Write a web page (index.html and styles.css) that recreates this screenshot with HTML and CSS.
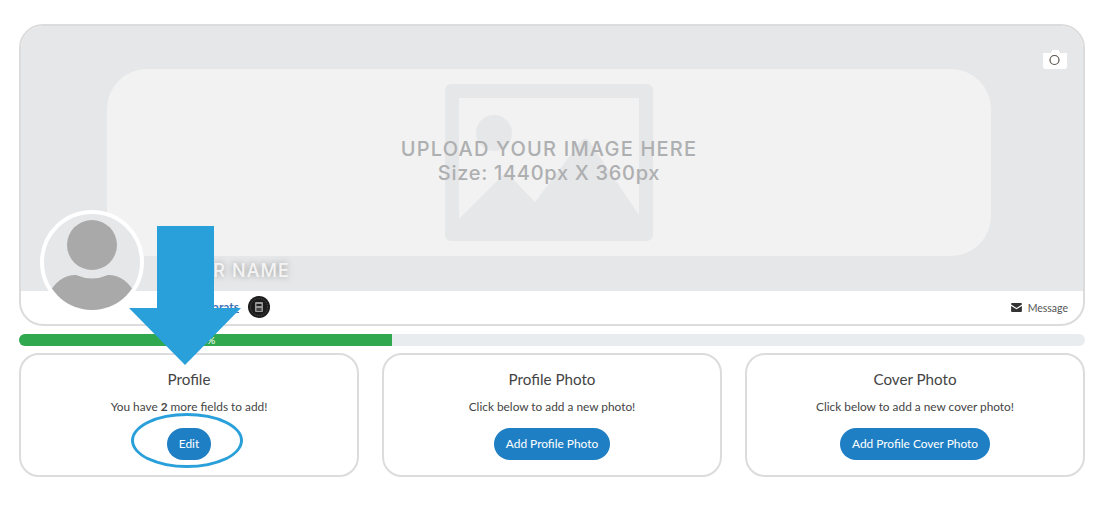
FILE: index.html
```html
<!DOCTYPE html>
<html>
<head>
    <title>Profile</title>
    <link rel="stylesheet" href="styles.css">
</head>
<body>
    <div class="container">
        <div class="hero">
            <div class="cover">
                <div class="upload-panel">
                    <svg class="upload-icon" viewBox="0 0 208 157">
                        <path fill-rule="evenodd" d="M6 0H202a6 6 0 0 1 6 6V151a6 6 0 0 1-6 6H6a6 6 0 0 1-6-6V6a6 6 0 0 1 6-6ZM14 14V135L61 88L90 118L136 57Q140 52 144 57L194 131V14Z"/>
                        <circle cx="49" cy="49" r="18"/>
                    </svg>
                    <div class="upload-text">
                        <div class="upload-title">UPLOAD YOUR IMAGE HERE</div>
                        <div class="upload-size">Size: 1440px X 360px</div>
                    </div>
                </div>
                <svg class="camera" viewBox="0 0 26 22">
                    <path class="camera-body" d="M1 5H8L10 2H17L19 5H25V20Q25 21 24 21H2Q1 21 1 20Z"/>
                    <circle class="camera-lens" cx="12.500" cy="12" r="4.500"/>
                </svg>
                <div class="hero-name">YOUR NAME</div>
            </div>
            <div class="hero-bar">
                <div class="hero-links">
                    <a class="carats" href="#">0 Carats</a>
                    <svg class="badge" viewBox="0 0 22 22">
                        <circle cx="11" cy="11" r="11" fill="#1c1c1c"/>
                        <circle cx="11" cy="11" r="8.500" fill="none" stroke="#555" stroke-dasharray="1 1"/>
                        <rect x="7" y="6" width="8" height="10" rx="1" fill="#999"/>
                        <rect x="8.500" y="8" width="5" height="2" fill="#222"/>
                        <rect x="8.500" y="12" width="5" height="3" fill="#444"/>
                    </svg>
                </div>
                <div class="message">
                    <svg class="message-icon" viewBox="0 0 12 10">
                        <path d="M0 1Q0 0 1 0H11Q12 0 12 1V1.800L6 5.500L0 1.800Z"/>
                        <path d="M0 3.200L6 7L12 3.200V9Q12 10 11 10H1Q0 10 0 9Z"/>
                    </svg>
                    Message
                </div>
            </div>
            <div class="avatar">
                <svg viewBox="0 0 96 96">
                    <circle cx="48" cy="31" r="25" fill="#a9a9a9"/>
                    <path d="M4 82C10 68 20 61 32 61Q48 68 64 61C76 61 86 68 92 82Q74 100 48 100Q22 100 4 82Z" fill="#a9a9a9"/>
                </svg>
            </div>
        </div>

        <div class="progress">
            <div class="progress-fill" style="width: 35%">35%</div>
        </div>

        <div class="cards">
            <div class="card">
                <h2>Profile</h2>
                <p>You have <b>2</b> more fields to add!</p>
                <a class="card-button" href="#">Edit</a>
            </div>
            <div class="card">
                <h2>Profile Photo</h2>
                <p>Click below to add a new photo!</p>
                <a class="card-button" href="#">Add Profile Photo</a>
            </div>
            <div class="card">
                <h2>Cover Photo</h2>
                <p>Click below to add a new cover photo!</p>
                <a class="card-button" href="#">Add Profile Cover Photo</a>
            </div>
        </div>

        <!-- tutorial arrow and ring drawn on top of the page -->
        <svg class="callout-arrow" viewBox="0 0 112 139">
            <path d="M28 0H85V82H112L56 139L0 82H28Z"/>
        </svg>
        <div class="callout-ring"></div>
    </div>
</body>
</html>
```

FILE: styles.css
```css
body {
    margin: 0;
    font-family: Lato, Arial, sans-serif;
    background-color: #fff;
    color: #444;
}

.container {
    position: relative;
    width: 1066px;
    height: 484px;
    padding: 24px 0 0 19px;
}

.hero {
    position: relative;
    height: 302px;
    box-sizing: border-box;
    border: 2px solid #dcdcdc;
    border-radius: 24px;
    overflow: hidden;
}

.cover {
    position: relative;
    height: 265px;
    box-sizing: border-box;
    padding: 43px 92px 0 86px;
    background-color: #e6e7e8;
}

.upload-panel {
    position: relative;
    display: flex;
    align-items: center;
    justify-content: center;
    height: 187px;
    border-radius: 40px;
    background-color: #f2f2f2;
}

.upload-icon {
    width: 208px;
    height: 157px;
    fill: #e6e7e8;
}

.upload-text {
    position: absolute;
    top: 68px;
    left: 0;
    right: 0;
    text-align: center;
    font-family: Inter, Arial, sans-serif;
    font-size: 20px;
    font-weight: 500;
    line-height: 24px;
    color: #aeafb1;
}

.upload-title {
    letter-spacing: 1.2px;
}

.upload-size {
    letter-spacing: 0.7px;
}

.camera {
    position: absolute;
    top: 22px;
    right: 15px;
    width: 26px;
    height: 22px;
    filter: drop-shadow(0.5px 0.5px 0.5px #8a7a66);
}

.camera-body {
    fill: #fff;
}

.camera-lens {
    fill: none;
    stroke: #5a5048;
    stroke-width: 1.200;
}

.hero-name {
    position: absolute;
    left: 150px;
    bottom: 10px;
    font-family: Inter, Arial, sans-serif;
    font-size: 18px;
    font-weight: 500;
    letter-spacing: 1.1px;
    color: #f4f4f4;
    text-shadow: 0 0 6px rgba(0, 0, 0, 0.35);
}

.hero-bar {
    display: flex;
    align-items: center;
    justify-content: space-between;
    height: 33px;
    padding: 0 15px 0 174px;
}

.hero-links {
    display: flex;
    align-items: center;
    gap: 9px;
    margin-bottom: 2px;
}

.carats {
    font-size: 12px;
    font-weight: bold;
    color: #3f72b5;
    text-decoration: underline;
}

.badge {
    width: 22px;
    height: 22px;
}

.message {
    display: flex;
    align-items: center;
    gap: 6px;
    font-size: 10.500px;
    color: #555;
}

.message-icon {
    width: 11px;
    height: 9px;
    fill: #333;
}

.avatar {
    position: absolute;
    left: 19px;
    top: 184px;
    width: 96px;
    height: 96px;
    border: 4px solid #fff;
    border-radius: 50%;
    background-color: #e6e7e8;
    overflow: hidden;
}

.avatar svg {
    display: block;
    width: 96px;
    height: 96px;
}

.progress {
    height: 12px;
    margin-top: 8px;
    border-radius: 6px;
    background-color: #e9ecef;
    overflow: hidden;
}

.progress-fill {
    height: 12px;
    line-height: 12px;
    text-align: center;
    font-size: 10px;
    color: #fff;
    background-color: #2fa84f;
}

.cards {
    display: flex;
    gap: 23px;
    margin-top: 7px;
}

.card {
    flex: 1;
    height: 124px;
    box-sizing: border-box;
    border: 2px solid #dcdcdc;
    border-radius: 20px;
    text-align: center;
}

.card h2 {
    margin: 15px 0 0;
    font-size: 15.200px;
    font-weight: 400;
    line-height: 18px;
}

.card p {
    margin: 10px 0 0;
    font-size: 11.850px;
    line-height: 18px;
}

.card-button {
    display: inline-block;
    margin-top: 12px;
    padding: 0 12px;
    height: 32px;
    line-height: 32px;
    border-radius: 16px;
    font-size: 11.900px;
    color: #fff;
    text-decoration: none;
    background-color: #1f7fc4;
}

.callout-arrow {
    position: absolute;
    left: 129px;
    top: 226px;
    width: 112px;
    height: 139px;
    fill: #29a0da;
}

.callout-ring {
    position: absolute;
    left: 131px;
    top: 413px;
    width: 112px;
    height: 55px;
    box-sizing: border-box;
    border: 3.500px solid #29a0da;
    border-radius: 50%;
}
```
